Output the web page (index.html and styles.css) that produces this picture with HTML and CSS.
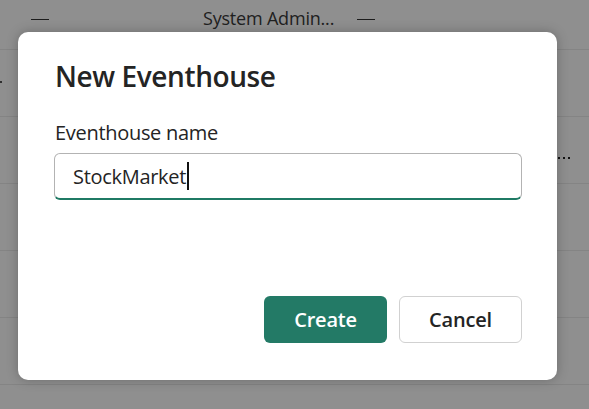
FILE: index.html
```html
<!DOCTYPE html>
<html>
<head>
<meta charset="utf-8">
<link rel="stylesheet" href="styles.css">
</head>
<body>
<div class="page">
  <div class="header">
    <span class="dash d1"></span>
    <span class="htitle">System Admin...</span>
    <span class="dash d2"></span>
  </div>
  <div class="row"><span class="ldot"></span></div>
  <div class="row"><span class="rdots"><i></i><i></i><i></i></span></div>
  <div class="row"></div>
  <div class="row"></div>
  <div class="row"></div>
</div>
<div class="overlay"></div>
<div class="dialog">
  <h1 class="title">New Eventhouse</h1>
  <label class="label">Eventhouse name</label>
  <div class="input"><span class="value">StockMarket</span><span class="caret"></span></div>
  <div class="actions">
    <button class="btn primary">Create</button>
    <button class="btn secondary">Cancel</button>
  </div>
</div>
</body>
</html>
```
FILE: styles.css
```css
html, body { margin: 0; padding: 0; }
body {
  width: 589px; height: 409px; overflow: hidden; position: relative;
  background: #ffffff;
  font-family: "Open Sans", "Noto Sans", sans-serif;
}
.page { width: 589px; }
.header {
  height: 50px; border-bottom: 1px solid #ececec; box-sizing: border-box;
  position: relative;
}
.dash { position: absolute; top: 19px; height: 1px; width: 18px; background: #333; }
.d1 { left: 31px; }
.d2 { left: 357px; }
.htitle { position: absolute; left: 203px; top: 6px; font-size: 18px; color: #3a3a3a; letter-spacing: -0.2px; }
.row { height: 67px; border-bottom: 1px solid #ececec; box-sizing: border-box; position: relative; }
.ldot { position: absolute; left: 0; top: 31px; width: 2px; height: 2px; background: #555; }
.rdots { position: absolute; left: 558px; top: 40px; display: flex; gap: 3px; }
.rdots i { display: block; width: 2px; height: 2px; background: #222; }
.overlay { position: absolute; inset: 0; background: rgba(0,0,0,0.44); }
.dialog {
  position: absolute; left: 18px; top: 32px; width: 539px; height: 348px;
  background: #fff; border-radius: 10px; box-sizing: border-box;
  padding: 24px 35px 0 37px;
  box-shadow: 0 0 12px rgba(0,0,0,0.25);
  display: flex; flex-direction: column;
}
.title { margin: 0; font-size: 28px; font-weight: 600; color: #242424; line-height: 40px; letter-spacing: -0.4px; }
.label { margin-top: 25px; font-size: 20px; color: #242424; line-height: 24px; letter-spacing: -0.3px; }
.input {
  margin-top: 8px; margin-left: -1px; height: 47px; box-sizing: border-box;
  border: 1px solid #b3b3b3; border-bottom: 2px solid #1f7a64; border-radius: 6px;
  display: flex; align-items: center; padding-left: 18px;
}
.value { font-size: 20px; color: #242424; letter-spacing: -0.3px; }
.caret { width: 2px; height: 28px; background: #111; margin-left: 1px; }
.actions { margin-top: auto; margin-bottom: 37px; display: flex; justify-content: flex-end; gap: 12px; }
.btn {
  width: 123px; height: 47px; border-radius: 6px; font-family: inherit;
  font-size: 20px; font-weight: 600; cursor: pointer; letter-spacing: -0.2px;
}
.primary { background: #237a66; color: #fff; border: none; }
.secondary { background: #fff; color: #242424; border: 1px solid #d1d1d1; }
```
